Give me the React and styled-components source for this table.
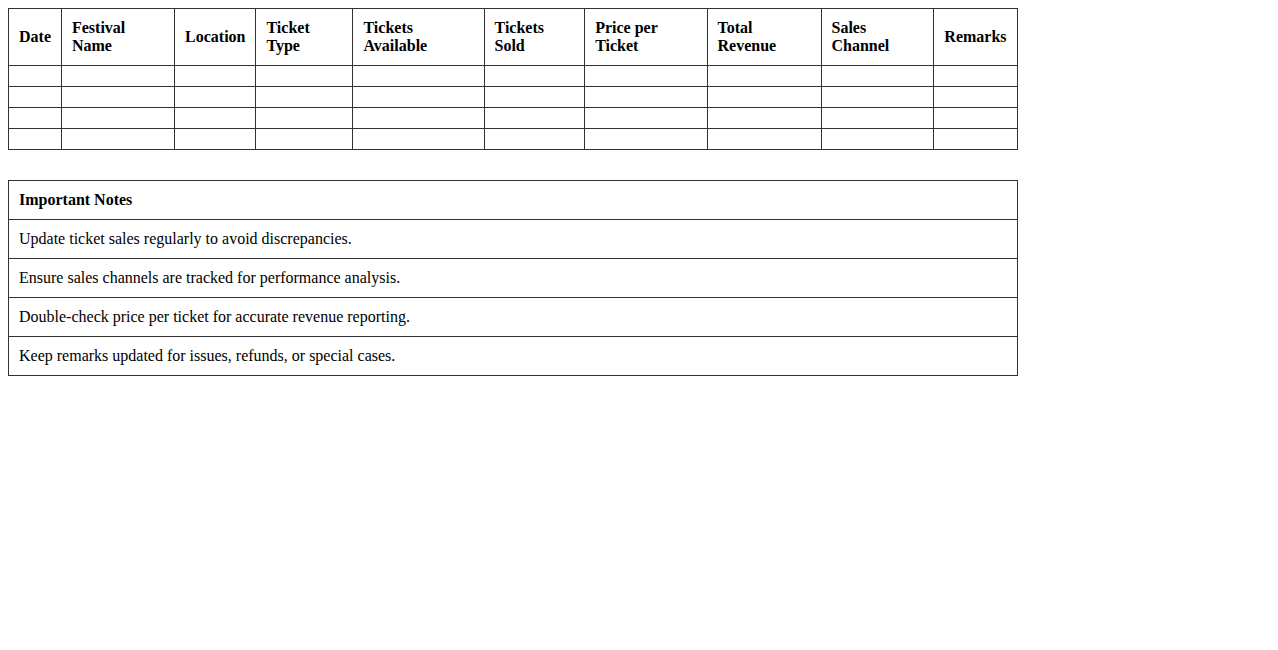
import React from "react";
import styled, { createGlobalStyle } from "styled-components";

const GlobalStyle = createGlobalStyle`
  body {
    margin: 8px;
    font-family: "Liberation Serif", "Times New Roman", serif;
    font-size: 16px;
    color: #000;
    background: #fff;
  }
`;

const Table = styled.table`
  width: 80%;
  border-collapse: collapse;
  margin-bottom: ${(p) => p.$gap || 0}px;
`;

const Th = styled.th`
  border: 1px solid #333;
  padding: 10px;
  text-align: left;
  font-weight: bold;
`;

const Td = styled.td`
  border: 1px solid #333;
  padding: 10px;
  text-align: left;
`;

const headers = [
  "Date",
  "Festival Name",
  "Location",
  "Ticket Type",
  "Tickets Available",
  "Tickets Sold",
  "Price per Ticket",
  "Total Revenue",
  "Sales Channel",
  "Remarks",
];

const notes = [
  "Update ticket sales regularly to avoid discrepancies.",
  "Ensure sales channels are tracked for performance analysis.",
  "Double-check price per ticket for accurate revenue reporting.",
  "Keep remarks updated for issues, refunds, or special cases.",
];

export default function App() {
  return (
    <>
      <GlobalStyle />
      <Table $gap={30}>
        <thead>
          <tr>
            {headers.map((h) => (
              <Th key={h}>{h}</Th>
            ))}
          </tr>
        </thead>
        <tbody>
          {[0, 1, 2, 3].map((r) => (
            <tr key={r}>
              {headers.map((h) => (
                <Td key={h}></Td>
              ))}
            </tr>
          ))}
        </tbody>
      </Table>
      <Table>
        <thead>
          <tr>
            <Th>Important Notes</Th>
          </tr>
        </thead>
        <tbody>
          {notes.map((n) => (
            <tr key={n}>
              <Td>{n}</Td>
            </tr>
          ))}
        </tbody>
      </Table>
    </>
  );
}
